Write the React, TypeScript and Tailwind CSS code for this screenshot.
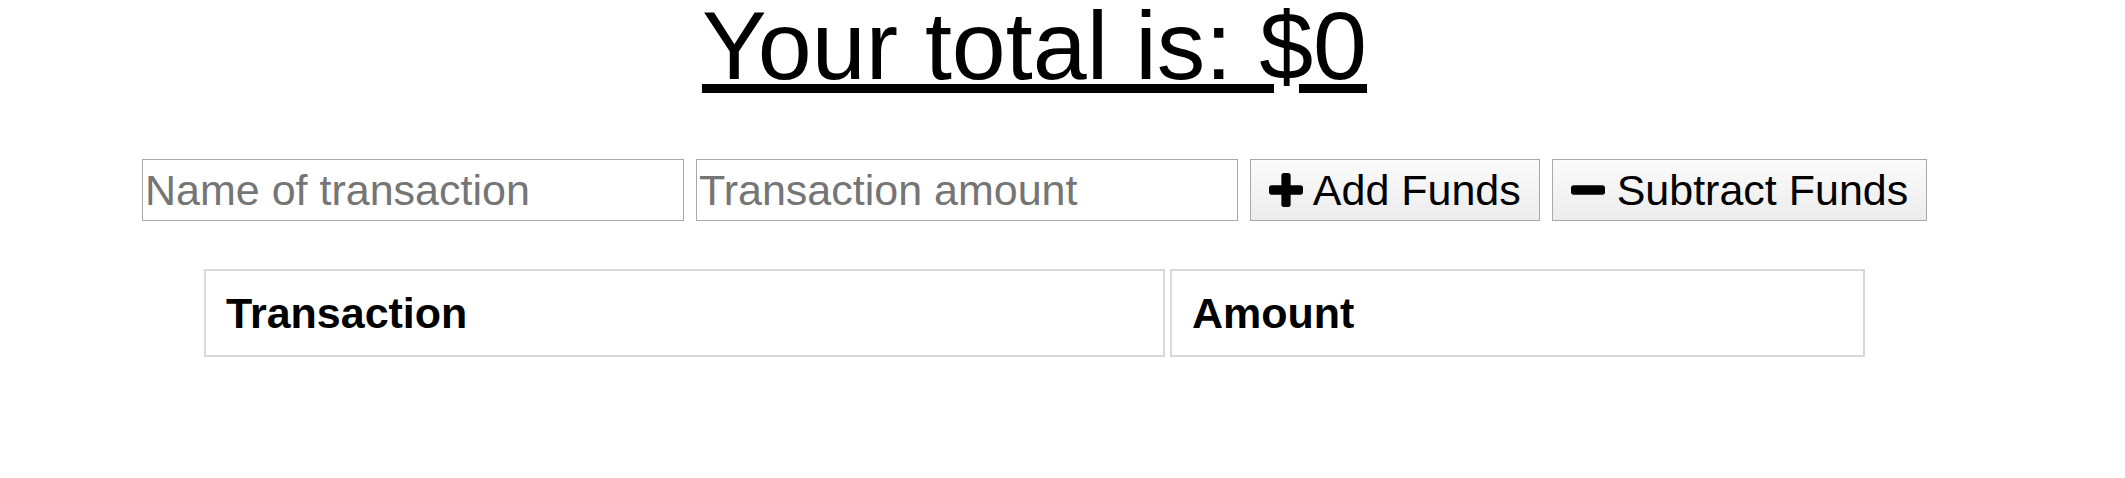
import React from "react";

const PlusIcon = () => (
  <svg
    viewBox="0 192 1408 1408"
    className="inline-block w-[34px] h-[34px] align-[-2px]"
    fill="currentColor"
  >
    <path d="M1408 800v192q0 40-28 68t-68 28h-416v416q0 40-28 68t-68 28h-192q-40 0-68-28t-28-68v-416h-416q-40 0-68-28t-28-68v-192q0-40 28-68t68-28h416v-416q0-40 28-68t68-28h192q40 0 68 28t28 68v416h416q40 0 68 28t28 68z" />
  </svg>
);

const MinusIcon = () => (
  <svg
    viewBox="0 192 1408 1408"
    className="inline-block w-[34px] h-[34px] align-[-2px]"
    fill="currentColor"
  >
    <path d="M1408 800v192q0 40-28 68t-68 28h-1216q-40 0-68-28t-28-68v-192q0-40 28-68t68-28h1216q40 0 68 28t28 68z" />
  </svg>
);

export default function App() {
  return (
    <div className="w-[2125px] h-[478px] bg-white font-['Liberation_Sans',Arial,sans-serif] text-black pr-[56px]">
      <div className="flex flex-col items-center">
        <h1 className="text-[97px] leading-[92px] font-normal underline text-center">
          Your total is: $0
        </h1>

        <div className="mt-[67px] flex items-start gap-[12px]">
          <input
            type="text"
            placeholder="Name of transaction"
            className="w-[542px] h-[62px] border border-[#a9a9a9] px-[2px] text-[43px] placeholder:text-[#757575] bg-white outline-none"
          />
          <input
            type="number"
            placeholder="Transaction amount"
            className="w-[542px] h-[62px] border border-[#a9a9a9] px-[2px] text-[43px] placeholder:text-[#757575] bg-white outline-none [appearance:textfield]"
          />
          <button className="w-[290px] h-[62px] border border-[#a9a9a9] bg-gradient-to-b from-[#fbfbfb] to-[#ececec] text-[43px] flex items-center justify-center whitespace-nowrap">
            <span>
              <PlusIcon /> Add Funds
            </span>
          </button>
          <button className="w-[375px] h-[62px] border border-[#a9a9a9] bg-gradient-to-b from-[#fbfbfb] to-[#ececec] text-[43px] flex items-center justify-center whitespace-nowrap">
            <span>
              <MinusIcon /> Subtract Funds
            </span>
          </button>
        </div>

        <div className="mt-[48px] flex gap-[5px]">
          <div className="w-[961px] h-[88px] border-2 border-[#d8d8d8] pl-[20px] flex items-center text-[43px] font-bold">
            Transaction
          </div>
          <div className="w-[695px] h-[88px] border-2 border-[#d8d8d8] pl-[20px] flex items-center text-[43px] font-bold">
            Amount
          </div>
        </div>
      </div>
    </div>
  );
}
